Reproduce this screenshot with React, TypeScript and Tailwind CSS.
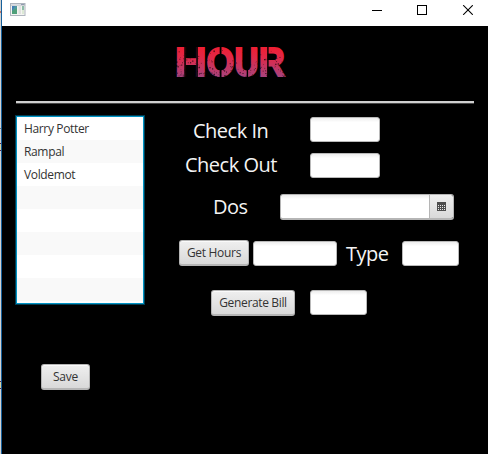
import React from 'react';

const people = ['Harry Potter', 'Rampal', 'Voldemot', '', '', '', '', ''];

function Field({ className }: { className: string }) {
  return (
    <input
      className={`block h-[25px] shrink-0 rounded-[3px] border border-[#b9b9b9] bg-white bg-linear-to-b from-[#ededed] from-0% to-white to-[18%] px-1.5 text-xs text-[#333] outline-none ${className}`}
    />
  );
}

function Button({ className, textClass, children }: { className: string; textClass: string; children: string }) {
  return (
    <button
      className={`flex h-[26px] shrink-0 items-center justify-center rounded-[3px] border border-b-2 border-[#b5b5b5] bg-linear-to-b from-[#efefef] to-[#d9d9d9] text-xs whitespace-nowrap text-[#333] shadow-[inset_0_1px_0_#fafafa] ${className}`}
    >
      <span className={textClass}>{children}</span>
    </button>
  );
}

function Label({ className, children }: { className: string; children: string }) {
  return (
    <span className={`block shrink-0 text-[20px] leading-[28px] tracking-[-0.5px] whitespace-nowrap text-[#f4f4f4] ${className}`}>
      {children}
    </span>
  );
}

// Deterministic wear marks scattered over the logo, denser towards the feet of the letters.
function wearMarks() {
  const marks: { x: number; y: number; w: number; h: number; o: number }[] = [];
  let seed = 41;
  const next = () => {
    seed = (seed * 16807) % 2147483647;
    return seed / 2147483647;
  };
  for (let i = 0; i < 230; i++) {
    const x = next() * 110;
    const y = Math.sqrt(next()) * 32;
    const s = 0.5 + next() * 0.8;
    marks.push({ x, y, w: s, h: s * (0.7 + next() * 0.7), o: 0.35 + next() * 0.5 });
  }
  return marks;
}

function Logo() {
  return (
    <svg className="block" width="114" height="54" viewBox="-2 -10 114 54" role="img" aria-label="HOUR">
      <defs>
        <linearGradient id="heat" gradientUnits="userSpaceOnUse" x1="0" y1="2" x2="0" y2="32">
          <stop offset="0" stopColor="#f01e32" />
          <stop offset="0.35" stopColor="#e02848" />
          <stop offset="1" stopColor="#a8437d" />
        </linearGradient>
      </defs>
      <g fill="url(#heat)" stroke="url(#heat)" strokeWidth="2" fontFamily="Liberation Sans, sans-serif" fontWeight="700" fontSize="40">
        <text x="-1" y="31" textLength="31.6" lengthAdjust="spacingAndGlyphs">H</text>
        <text x="30.6" y="31" textLength="27.8" lengthAdjust="spacingAndGlyphs">O</text>
        <text x="58.6" y="31" textLength="24" lengthAdjust="spacingAndGlyphs">U</text>
        <text x="82.7" y="31" textLength="26.1" lengthAdjust="spacingAndGlyphs">R</text>
      </g>
      <g fill="#000">
        <rect x="8.3" y="2" width="1.5" height="31" />
        <rect x="20.3" y="2" width="1.5" height="31" />
        <rect x="43.7" y="0" width="1.8" height="34" />
        <rect x="70.7" y="20" width="1.4" height="14" />
        <rect x="91.2" y="0" width="1.4" height="34" />
        {wearMarks().map((m, i) => (
          <rect key={i} x={m.x} y={m.y} width={m.w} height={m.h} opacity={m.o} />
        ))}
      </g>
    </svg>
  );
}

function TitleBar() {
  return (
    <header className="flex h-[26px] items-start justify-between bg-white pl-2">
      <svg className="mt-[3px]" width="16" height="14" viewBox="0 0 16 14">
        <rect x="0" y="0" width="15.5" height="13" fill="#aeb4bd" />
        <rect x="1" y="1" width="10" height="1" fill="#d8dce2" />
        <rect x="11" y="1" width="3" height="1" fill="#919bb0" />
        <rect x="1" y="2.5" width="13.5" height="9.5" fill="#f4f4f1" />
        <rect x="2" y="3" width="5" height="8" fill="#4e98a0" />
        <path d="M2 3h3L2 8z" fill="#447db5" />
        <path d="M2 8l5-3v6H2z" fill="#50a07a" />
        <rect x="8.5" y="3" width="2.5" height="8" fill="#dfe1df" />
        <rect x="12" y="3" width="2" height="4" fill="#8cbca8" />
        <rect x="12" y="7" width="2" height="4" fill="#dce9d5" />
      </svg>
      <svg className="mt-[5px] mr-[15px]" width="101" height="10" viewBox="0 0 101 10" fill="none" stroke="#000">
        <path d="M0 5.5h10" />
        <rect x="45.5" y="0.5" width="9" height="9" />
        <path d="M91.2 0.2l9.6 9.6M100.8 0.2l-9.6 9.6" strokeWidth="1.1" />
      </svg>
    </header>
  );
}

function CalendarIcon() {
  return (
    <svg width="9" height="9" viewBox="0 0 9 9">
      <rect width="9" height="9" fill="#4d4d4d" />
      <g fill="#e8e8e8">
        {[3, 5, 7].map((y) => [1, 3, 5, 7].map((x) => <rect key={`${x}-${y}`} x={x} y={y} width="1" height="1" />))}
      </g>
    </svg>
  );
}

export default function App() {
  return (
    <div className="flex h-[454px] w-[488px] overflow-hidden bg-black font-['Open_Sans','Noto_Sans',sans-serif]">
      <div className="flex w-0.5 shrink-0 flex-col border-r border-[#17609b] bg-[#d2d2d2]">
        <div className="mt-[11px] h-0.5 bg-[#c17567]" />
        <div className="mt-[115px] h-px bg-[#777]" />
        <div className="mt-[14px] h-[8px] border-y border-[#54204c] bg-[#d9d5a4]" />
        <div className="mt-[230px] h-[8px] border-y border-[#54204c] bg-[#d9d5a4]" />
      </div>
      <div className="flex w-[486px] flex-col">
        <TitleBar />
        <main className="flex flex-1 flex-col pl-3.5">
          <div className="h-[75px] pt-[9px] pl-[158px]">
            <Logo />
          </div>
          <div className="h-[3px] w-[458px] shrink-0 border-b border-[#484848] bg-[#d0d0d0]" />
          <div className="flex">
            <aside className="w-32 shrink-0 pt-3">
              <ul className="h-[188px] overflow-hidden border border-[#0093c4] bg-white shadow-[0_0_0_1px_#003d52]">
                {people.map((name, i) => (
                  <li key={i} className={`h-[23px] pl-[7px] text-xs leading-[23px] text-[#333] ${i % 2 ? 'bg-[#f9f9f9]' : 'bg-white'}`}>
                    <span className="tracking-[-0.35px]">{name}</span>
                  </li>
                ))}
              </ul>
              <Button className="mt-[60px] ml-[25px] w-[49px]" textClass="tracking-[-0.2px]">Save</Button>
            </aside>
            <section className="flex flex-col pt-[13px]">
              <div className="flex h-[25px] items-start">
                <Label className="ml-[49px] w-[117px]">Check In</Label>
                <Field className="w-[70px]" />
              </div>
              <div className="mt-[11px] flex h-[25px] items-start">
                <Label className="-mt-0.5 ml-[41px] w-[125px]">Check Out</Label>
                <Field className="w-[70px]" />
              </div>
              <div className="mt-4 flex h-[26px] items-start">
                <Label className="-mt-px ml-[69px] w-[67px]">Dos</Label>
                <div className="flex h-[26px] w-[174px] overflow-hidden rounded-[3px] border border-b-2 border-[#b5b5b5]">
                  <input className="w-[148px] bg-white bg-linear-to-b from-[#ededed] to-white to-[18%] outline-none" />
                  <button className="flex flex-1 items-center justify-center border-l border-[#b5b5b5] bg-linear-to-b from-[#efefef] to-[#d9d9d9]">
                    <CalendarIcon />
                  </button>
                </div>
              </div>
              <div className="mt-5 flex h-[26px] items-start">
                <Button className="ml-[35px] w-[70px]" textClass="tracking-[-0.3px]">Get Hours</Button>
                <Field className="mt-px ml-1 w-[84px]" />
                <Label className="ml-[9px] w-14">Type</Label>
                <Field className="mt-px w-[57px]" />
              </div>
              <div className="mt-6 flex items-start">
                <Button className="ml-[67px] w-[84px]" textClass="tracking-[-0.35px]">Generate Bill</Button>
                <Field className="ml-[15px] w-[57px]" />
              </div>
            </section>
          </div>
        </main>
      </div>
    </div>
  );
}
